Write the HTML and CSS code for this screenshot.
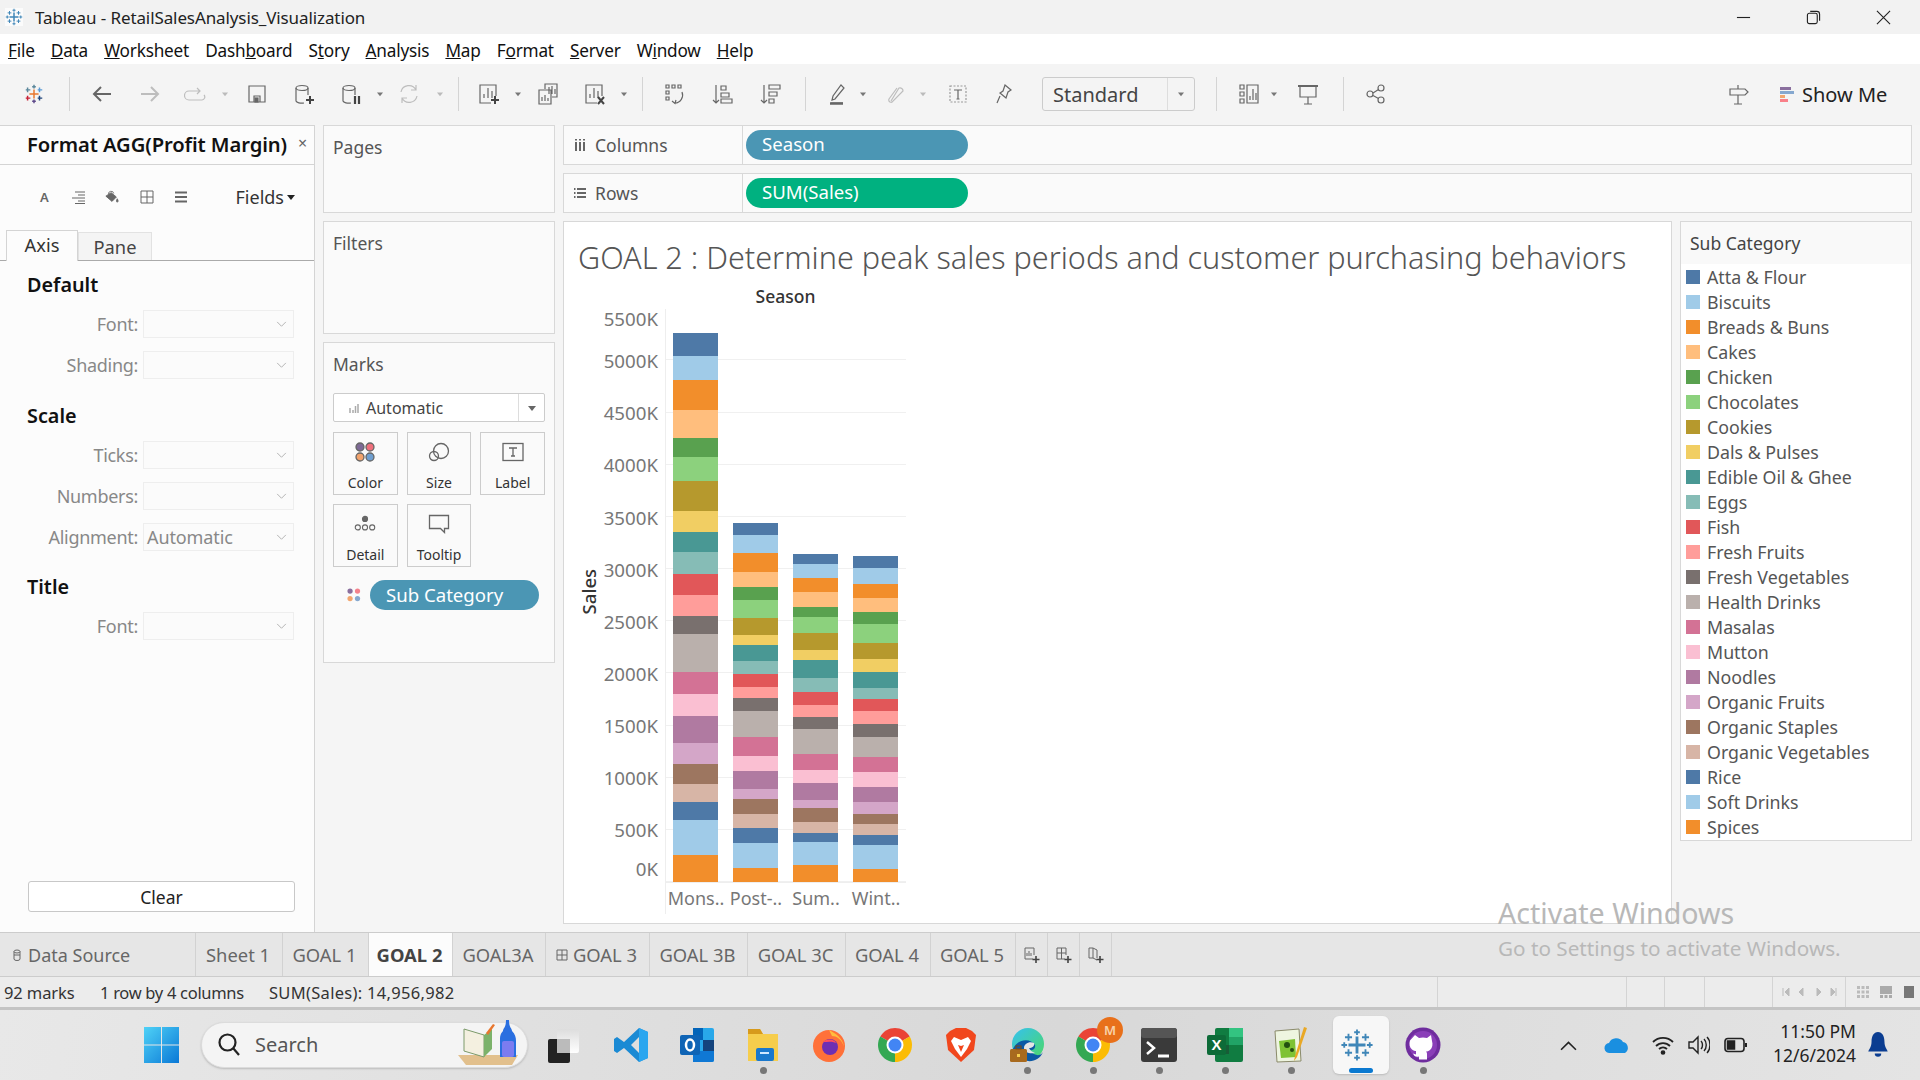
FILE: index.html
```html
<!DOCTYPE html>
<html lang="en">
<head>
<meta charset="utf-8">
<title>Tableau - RetailSalesAnalysis_Visualization</title>
<link rel="stylesheet" href="styles.css">
</head>
<body>
<svg class="defs" aria-hidden="true">
  <symbol id="tplus" viewBox="0 0 24 24"><path d="M12 6v12M6 12h12" stroke-width="2"/><path d="M12 1v4M10 3h4M12 19v4M10 21h4M1 12h4M3 10v4M19 12h4M21 10v4M6 4v5M3.5 6.5h5M18 4v5M15.500 6.500h5M6 15v5M3.500 17.500h5M18 15v5M15.500 17.500h5" stroke-width="1.300"/></symbol>
  <symbol id="caret" viewBox="0 0 8 8"><path d="M0 2h8L4 7z" stroke="none"/></symbol>
  <symbol id="chev" viewBox="0 0 12 8"><path d="M1 1l5 5 5-5" fill="none"/></symbol>
</svg>

<header class="titlebar">
  <svg class="tlogo" viewBox="0 0 24 24"><use href="#tplus"/></svg>
  <span class="apptitle">Tableau - RetailSalesAnalysis_Visualization</span>
  <div class="winctl">
    <svg viewBox="0 0 16 16"><path d="M1 8h14"/></svg>
    <svg viewBox="0 0 16 16"><rect x="1.500" y="3.500" width="10.500" height="11" rx="2"/><path d="M4.500 1.500h7a3 3 0 0 1 3 3v7"/></svg>
    <svg viewBox="0 0 16 16"><path d="M1 1l14 14M15 1L1 15"/></svg>
  </div>
</header>

<nav class="menubar">
  <span><u>F</u>ile</span><span><u>D</u>ata</span><span><u>W</u>orksheet</span><span>Dash<u>b</u>oard</span><span>S<u>t</u>ory</span><span><u>A</u>nalysis</span><span><u>M</u>ap</span><span>F<u>o</u>rmat</span><span><u>S</u>erver</span><span>W<u>i</u>ndow</span><span><u>H</u>elp</span>
</nav>

<div class="toolbar">
  <svg class="ti" viewBox="0 0 24 24"><g fill="none" stroke-width="1.600"><path d="M12 7v10M7 12h10" stroke="#e8762d"/><path d="M12 2v4M10 4h4M5 5v5M3 7.500h5" stroke="#5b879b"/><path d="M12 18v4M10 20h4" stroke="#5f4b8b"/><path d="M18 5v5M16 7.500h5" stroke="#5b9bd5"/><path d="M5 14v5M3 16.500h5" stroke="#c72035"/><path d="M18 14v5M16 16.500h5" stroke="#1f447a"/></g></svg>
  <i class="sep"></i>
  <svg class="ti" viewBox="0 0 22 22"><path d="M20 11H4M10 4l-7 7 7 7" stroke-width="2"/></svg>
  <svg class="ti off" viewBox="0 0 22 22"><path d="M2 11h16M12 4l7 7-7 7" stroke-width="2"/></svg>
  <svg class="ti off" viewBox="0 0 22 22"><path d="M16 8H5a3 3 0 0 0 0 9h13a3 3 0 0 0 2-5M13 5l3 3-3 3"/></svg>
  <svg class="tc off" viewBox="0 0 8 8"><use href="#caret"/></svg>
  <svg class="ti" viewBox="0 0 22 22"><path d="M3 3h16v16H3zM8 19v-6h6v6"/><rect x="9" y="15" width="3" height="4" fill="#666"/></svg>
  <svg class="ti" viewBox="0 0 22 22"><ellipse cx="9" cy="5" rx="6" ry="2.500"/><path d="M3 5v13a6 2.500 0 0 0 8 2M15 5v7"/><path d="M17 13v8M13 17h8" stroke-width="2" stroke="#444"/></svg>
  <svg class="ti" viewBox="0 0 22 22"><ellipse cx="9" cy="5" rx="6" ry="2.500"/><path d="M3 5v13a6 2.500 0 0 0 8 2M15 5v7"/><path d="M15 13v8M19 13v8" stroke-width="2.200" stroke="#444"/></svg>
  <svg class="tc" viewBox="0 0 8 8"><use href="#caret"/></svg>
  <svg class="ti off" viewBox="0 0 22 22"><path d="M3 9a8 8 0 0 1 15-2M19 13a8 8 0 0 1-15 2M18 2v5h-5M4 20v-5h5"/></svg>
  <svg class="tc off" viewBox="0 0 8 8"><use href="#caret"/></svg>
  <i class="sep"></i>
  <svg class="ti" viewBox="0 0 22 22"><path d="M13 20H2V2h16v11M6 15v-4M10 15V5M14 15V8" /><path d="M17 13v8M13 17h8" stroke-width="2" stroke="#444"/></svg>
  <svg class="tc" viewBox="0 0 8 8"><use href="#caret"/></svg>
  <svg class="ti" viewBox="0 0 22 22"><path d="M8 6V1h12v13h-5M12 11V4M15 11V3M18 11V6M2 7h12v14H2zM5 18v-4M8 18v-6M11 18v-3"/></svg>
  <svg class="ti" viewBox="0 0 22 22"><path d="M13 20H2V2h16v11M6 15v-4M10 15V5M14 15V8"/><path d="M14 14l6 7M20 14l-6 7" stroke-width="2" stroke="#444"/></svg>
  <svg class="tc" viewBox="0 0 8 8"><use href="#caret"/></svg>
  <i class="sep"></i>
  <svg class="ti" viewBox="0 0 22 22"><path d="M3 2h3v3H3zM9 2h3v3H9zM15 2h3v3h-3zM3 8h3v3H3zM3 14h3v3H3zM19 9a8 8 0 0 1-7 11M9 18l3 2.500 1-3.500"/></svg>
  <svg class="ti" viewBox="0 0 22 22"><path d="M4 2v18M1 17l3 3 3-3"/><path d="M9 3h5v4H9zM9 10h8v4H9zM9 16h11v4H9z"/></svg>
  <svg class="ti" viewBox="0 0 22 22"><path d="M4 2v18M1 17l3 3 3-3"/><path d="M9 2h11v4H9zM9 9h8v4H9zM9 16h5v4H9z"/></svg>
  <i class="sep"></i>
  <svg class="ti" viewBox="0 0 22 22"><path d="M14 2l3 3-9 11-3 1 1-4zM4 20h12" /><path d="M3 20.500h13" stroke-width="2.500"/></svg>
  <svg class="tc" viewBox="0 0 8 8"><use href="#caret"/></svg>
  <svg class="ti off" viewBox="0 0 22 22"><path d="M7 18l8-13a3 3 0 0 1 4 3L9 18a2 2 0 0 1-4-2l8-11"/></svg>
  <svg class="tc off" viewBox="0 0 8 8"><use href="#caret"/></svg>
  <svg class="ti" viewBox="0 0 22 22"><rect x="3" y="3" width="16" height="16" stroke-dasharray="2 1.500" stroke="#999"/><path d="M7 7h8M11 7v9M9.500 16h3"/></svg>
  <svg class="ti" viewBox="0 0 22 22"><path d="M12 2l6 5-3 2-2 6-6-5 3-2zM7 13l-3 7"/></svg>
  <div class="stdbox"><span>Standard</span><b><svg class="tc" viewBox="0 0 8 8"><use href="#caret"/></svg></b></div>
  <i class="sep"></i>
  <svg class="ti" viewBox="0 0 22 22"><path d="M2 2h4v4H2zM2 9h4v4H2zM2 16h4v4H2zM9 2h11v18H9zM12 17v-4M15 17V6M18 17v-7"/></svg>
  <svg class="tc" viewBox="0 0 8 8"><use href="#caret"/></svg>
  <svg class="ti" viewBox="0 0 22 22"><path d="M1 3h20" stroke-width="2"/><path d="M3 3v11h16V3M11 14v7M7 21h8"/></svg>
  <i class="sep"></i>
  <svg class="ti" viewBox="0 0 22 22"><circle cx="5" cy="11" r="3"/><circle cx="16" cy="5" r="3"/><circle cx="16" cy="17" r="3"/><path d="M8 10l5.500-3.500M8 12.500l5.500 3"/></svg>
  <svg class="ti" viewBox="0 0 22 22"><path d="M2 6h15l3 3-3 3H2zM10 2v4M10 12v9M6 21h8"/></svg>
  <div class="showme"><svg viewBox="0 0 14 15"><rect width="11" height="3" fill="#8a6f9e"/><rect y="4" width="14" height="3" fill="#86a8cf"/><rect y="8" width="5" height="3" fill="#f2a66f"/><rect y="12" width="8" height="3" fill="#f98089"/></svg><span>Show Me</span></div>
</div>

<main class="workspace">
  <aside class="format">
    <div class="fmt-head"><h2>Format AGG(Profit Margin)</h2><span class="x">×</span></div>
    <div class="fmt-icons">
      <span class="fa">A</span>
      <svg viewBox="0 0 14 14"><path d="M4 2h10M7 5h7M1 8h13M7 11h7M4 13.500h10"/></svg>
      <svg viewBox="0 0 16 14"><path d="M1 6l6-4 6 5-5 5z" fill="#666"/><path d="M4 4a3 3 0 0 1 6-1" fill="none"/><path d="M14 9c1 2 1.500 3 0 4-1.500-1-1-2 0-4z" fill="#666"/></svg>
      <svg viewBox="0 0 14 14"><path d="M1 1h12v12H1zM7 1v12M1 7h12"/></svg>
      <svg viewBox="0 0 14 14"><path d="M1 2.500h12M1 7h12M1 11.500h12" stroke-width="2.200"/></svg>
      <span class="fields">Fields<svg viewBox="0 0 8 8"><use href="#caret"/></svg></span>
    </div>
    <div class="fmt-tabs"><span class="on">Axis</span><span>Pane</span></div>
    <div class="fmt-body">
      <h3>Default</h3>
      <div class="frow"><label>Font:</label><div class="sel"><svg viewBox="0 0 12 8"><use href="#chev"/></svg></div></div>
      <div class="frow"><label>Shading:</label><div class="sel"><svg viewBox="0 0 12 8"><use href="#chev"/></svg></div></div>
      <h3 class="h-scale">Scale</h3>
      <div class="frow"><label>Ticks:</label><div class="sel"><svg viewBox="0 0 12 8"><use href="#chev"/></svg></div></div>
      <div class="frow"><label>Numbers:</label><div class="sel"><svg viewBox="0 0 12 8"><use href="#chev"/></svg></div></div>
      <div class="frow"><label>Alignment:</label><div class="sel">Automatic<svg viewBox="0 0 12 8"><use href="#chev"/></svg></div></div>
      <h3 class="h-title">Title</h3>
      <div class="frow"><label>Font:</label><div class="sel"><svg viewBox="0 0 12 8"><use href="#chev"/></svg></div></div>
    </div>
    <button class="clear" type="button">Clear</button>
  </aside>

  <section class="cards">
    <div class="card pages">Pages</div>
    <div class="card filters">Filters</div>
    <div class="card marks">
      <div>Marks</div>
      <div class="marktype"><svg viewBox="0 0 10 10"><path d="M1 5v5M4 7v3M6.500 3v7M9 1v9" stroke-width="1.500"/></svg><span>Automatic</span><b><svg viewBox="0 0 8 8"><use href="#caret"/></svg></b></div>
      <div class="markbtns">
        <div class="mb"><svg viewBox="0 0 20 20"><circle cx="5" cy="5" r="4" fill="#7e6a96"/><circle cx="15" cy="5" r="4" fill="#ef6f7c"/><circle cx="5" cy="15" r="4" fill="#f2a36c"/><circle cx="15" cy="15" r="4" fill="#6f9fd0"/></svg>Color</div>
        <div class="mb"><svg viewBox="0 0 22 20"><circle cx="13" cy="9" r="7.500"/><circle cx="6" cy="14" r="4.500"/></svg>Size</div>
        <div class="mb"><svg viewBox="0 0 22 20"><rect x="1" y="1.500" width="20" height="17"/><path d="M7 6h8M11 6v8M9 14h4"/></svg>Label</div>
        <div class="mb"><svg viewBox="0 0 26 20"><circle cx="13" cy="4" r="3" fill="#666"/><circle cx="4.500" cy="14" r="3"/><circle cx="13" cy="14" r="3"/><circle cx="21.500" cy="14" r="3"/></svg>Detail</div>
        <div class="mb"><svg viewBox="0 0 22 20"><path d="M1.500 1.500h19v13h-4v4l-4-4h-11z"/></svg>Tooltip</div>
      </div>
      <div class="markpill"><svg viewBox="0 0 16 16"><circle cx="3.500" cy="3.500" r="3" fill="#8a6f9e"/><circle cx="12" cy="3.500" r="3" fill="#f4828c"/><circle cx="3.500" cy="12" r="3" fill="#f2a66f"/><circle cx="12" cy="12" r="3" fill="#86a8cf"/></svg><span class="pill blue">Sub Category</span></div>
    </div>
  </section>

  <section class="stage">
    <div class="shelf"><div class="shelf-l"><svg viewBox="0 0 12 12"><path d="M2 3v9M6 3v9M10 3v9" stroke-width="2"/><path d="M2 0v1.500M6 0v1.500M10 0v1.500" stroke-width="2"/></svg>Columns</div><div class="shelf-r"><span class="pill blue wide">Season</span></div></div>
    <div class="shelf"><div class="shelf-l"><svg viewBox="0 0 12 12"><path d="M3 2h9M3 6h9M3 10h9M0 2h1.500M0 6h1.500M0 10h1.500" stroke-width="1.800"/></svg>Rows</div><div class="shelf-r"><span class="pill green wide">SUM(Sales)</span></div></div>
    <div class="vizrow">
      <div class="viz">
        <h1>GOAL 2 : Determine peak sales periods and customer purchasing behaviors</h1>
        <div class="chart">
          <div class="season">Season</div>
          <div class="ylabel"><span>Sales</span></div>
          <div class="yaxis"><span class="end top">5500K</span><span>5000K</span><span>4500K</span><span>4000K</span><span>3500K</span><span>3000K</span><span>2500K</span><span>2000K</span><span>1500K</span><span>1000K</span><span>500K</span><span class="end bot">0K</span></div>
          <div class="plot">
            <div class="col"><div class="bar" style="height:549px"><i class="c1" style="flex:56"></i><i class="c2" style="flex:59"></i><i class="c3" style="flex:73"></i><i class="c4" style="flex:69"></i><i class="c5" style="flex:47"></i><i class="c6" style="flex:58"></i><i class="c7" style="flex:74"></i><i class="c8" style="flex:51"></i><i class="c9" style="flex:49"></i><i class="c10" style="flex:54"></i><i class="c11" style="flex:52"></i><i class="c12" style="flex:51"></i><i class="c13" style="flex:44"></i><i class="c14" style="flex:93"></i><i class="c15" style="flex:54"></i><i class="c16" style="flex:54"></i><i class="c17" style="flex:66"></i><i class="c18" style="flex:52"></i><i class="c19" style="flex:49"></i><i class="c20" style="flex:44"></i><i class="c1" style="flex:44"></i><i class="c2" style="flex:86"></i><i class="c3" style="flex:66"></i></div></div>
            <div class="col"><div class="bar" style="height:359.200px"><i class="c1" style="flex:30"></i><i class="c2" style="flex:44"></i><i class="c3" style="flex:46"></i><i class="c4" style="flex:37"></i><i class="c5" style="flex:32"></i><i class="c6" style="flex:44"></i><i class="c7" style="flex:42"></i><i class="c8" style="flex:24"></i><i class="c9" style="flex:39"></i><i class="c10" style="flex:32"></i><i class="c11" style="flex:32"></i><i class="c12" style="flex:27"></i><i class="c13" style="flex:32"></i><i class="c14" style="flex:64"></i><i class="c15" style="flex:46"></i><i class="c16" style="flex:37"></i><i class="c17" style="flex:44"></i><i class="c18" style="flex:25"></i><i class="c19" style="flex:36"></i><i class="c20" style="flex:35"></i><i class="c1" style="flex:36"></i><i class="c2" style="flex:62"></i><i class="c3" style="flex:34"></i></div></div>
            <div class="col"><div class="bar" style="height:328.200px"><i class="c1" style="flex:25"></i><i class="c2" style="flex:34"></i><i class="c3" style="flex:34"></i><i class="c4" style="flex:37"></i><i class="c5" style="flex:25"></i><i class="c6" style="flex:39"></i><i class="c7" style="flex:41"></i><i class="c8" style="flex:25"></i><i class="c9" style="flex:44"></i><i class="c10" style="flex:34"></i><i class="c11" style="flex:32"></i><i class="c12" style="flex:30"></i><i class="c13" style="flex:29"></i><i class="c14" style="flex:61"></i><i class="c15" style="flex:39"></i><i class="c16" style="flex:32"></i><i class="c17" style="flex:42"></i><i class="c18" style="flex:20"></i><i class="c19" style="flex:34"></i><i class="c20" style="flex:27"></i><i class="c1" style="flex:22"></i><i class="c2" style="flex:56"></i><i class="c3" style="flex:42"></i></div></div>
            <div class="col"><div class="bar" style="height:326.100px"><i class="c1" style="flex:30"></i><i class="c2" style="flex:39"></i><i class="c3" style="flex:34"></i><i class="c4" style="flex:34"></i><i class="c5" style="flex:30"></i><i class="c6" style="flex:46"></i><i class="c7" style="flex:40"></i><i class="c8" style="flex:31"></i><i class="c9" style="flex:40"></i><i class="c10" style="flex:27"></i><i class="c11" style="flex:29"></i><i class="c12" style="flex:32"></i><i class="c13" style="flex:32"></i><i class="c14" style="flex:49"></i><i class="c15" style="flex:36"></i><i class="c16" style="flex:37"></i><i class="c17" style="flex:37"></i><i class="c18" style="flex:29"></i><i class="c19" style="flex:25"></i><i class="c20" style="flex:27"></i><i class="c1" style="flex:24"></i><i class="c2" style="flex:59"></i><i class="c3" style="flex:32"></i></div></div>
          </div>
          <div class="xaxis"><span>Mons..</span><span>Post-..</span><span>Sum..</span><span>Wint..</span></div>
        </div>
      </div>
      <aside class="legend">
        <div class="leg-head">Sub Category</div>
        <ul>
          <li><i class="c1"></i>Atta &amp; Flour</li>
          <li><i class="c2"></i>Biscuits</li>
          <li><i class="c3"></i>Breads &amp; Buns</li>
          <li><i class="c4"></i>Cakes</li>
          <li><i class="c5"></i>Chicken</li>
          <li><i class="c6"></i>Chocolates</li>
          <li><i class="c7"></i>Cookies</li>
          <li><i class="c8"></i>Dals &amp; Pulses</li>
          <li><i class="c9"></i>Edible Oil &amp; Ghee</li>
          <li><i class="c10"></i>Eggs</li>
          <li><i class="c11"></i>Fish</li>
          <li><i class="c12"></i>Fresh Fruits</li>
          <li><i class="c13"></i>Fresh Vegetables</li>
          <li><i class="c14"></i>Health Drinks</li>
          <li><i class="c15"></i>Masalas</li>
          <li><i class="c16"></i>Mutton</li>
          <li><i class="c17"></i>Noodles</li>
          <li><i class="c18"></i>Organic Fruits</li>
          <li><i class="c19"></i>Organic Staples</li>
          <li><i class="c20"></i>Organic Vegetables</li>
          <li><i class="c1"></i>Rice</li>
          <li><i class="c2"></i>Soft Drinks</li>
          <li><i class="c3"></i>Spices</li>
        </ul>
      </aside>
    </div>
  </section>
</main>

<div class="tabs">
  <div class="tab ds"><svg viewBox="0 0 8 12"><ellipse cx="4" cy="2.500" rx="3" ry="1.500"/><path d="M1 2.500v7.500a3 1.500 0 0 0 6 0V2.500M1 6h6"/></svg>Data Source</div>
  <div class="tab">Sheet 1</div>
  <div class="tab">GOAL 1</div>
  <div class="tab active">GOAL 2</div>
  <div class="tab">GOAL3A</div>
  <div class="tab"><svg viewBox="0 0 12 12"><path d="M1 1h10v10H1zM6 1v10M1 6h10"/></svg>GOAL 3</div>
  <div class="tab">GOAL 3B</div>
  <div class="tab">GOAL 3C</div>
  <div class="tab">GOAL 4</div>
  <div class="tab">GOAL 5</div>
  <div class="tab"><svg class="nt" viewBox="0 0 16 16"><path d="M9 12H1V1h9v7M3 9V6M5 9V4M7 9V6"/><path d="M12 9v7M8.500 12.500h7" stroke-width="1.600" stroke="#444"/></svg></div>
  <div class="tab"><svg class="nt" viewBox="0 0 16 16"><path d="M9 12H1V1h9v7M1 6h9M5.500 1v11"/><path d="M12 9v7M8.500 12.500h7" stroke-width="1.600" stroke="#444"/></svg></div>
  <div class="tab"><svg class="nt" viewBox="0 0 16 16"><path d="M9 13l-4-2H1V1h4l4 2v8M5 1v10"/><path d="M12 9v7M8.500 12.500h7" stroke-width="1.600" stroke="#444"/></svg></div>
  <div class="tab blank"></div>
</div>

<footer class="status">
  <span class="st st1">92 marks</span><span class="st st2">1 row by 4 columns</span><span class="st st3">SUM(Sales): 14,956,982</span>
  <i class="cell c-a"></i><i class="cell c-b"></i><i class="cell c-c"></i><i class="cell c-d"></i>
  <div class="cell nav"><svg viewBox="0 0 54 10"><path d="M1 1v8M7 1L3 5l4 4zM21 1l-4 4 4 4zM35 1l4 4-4 4zM49 1l4 4-4 4zM54 1v8" fill="#bbb" stroke="#bbb"/></svg></div>
  <div class="cell views">
    <svg viewBox="0 0 12 12"><path d="M0 0h3v3H0zM4.500 0h3v3h-3zM9 0h3v3H9zM0 4.500h3v3H0zM4.500 4.500h3v3h-3zM9 4.500h3v3H9zM0 9h3v3H0zM4.500 9h3v3h-3zM9 9h3v3H9z" fill="#bbb"/></svg>
    <svg viewBox="0 0 12 12"><path d="M0 0h12v8H0zM0 9h3v3H0zM4.500 9h3v3h-3zM9 9h3v3H9z" fill="#aaa"/></svg>
    <svg viewBox="0 0 12 12"><path d="M1 0h10v12H1z" fill="#777"/></svg>
  </div>
</footer>

<div class="taskbar">
  <svg class="winlogo" viewBox="0 0 35 36"><defs><linearGradient id="wg" x1="0" y1="0" x2="1" y2="1"><stop offset="0" stop-color="#4fd2f7"/><stop offset="1" stop-color="#0a78d6"/></linearGradient></defs><path d="M0 0h17v17.500H0zM18 0h17v17.500H18zM0 18.500h17V36H0zM18 18.500h17V36H18z" fill="url(#wg)"/></svg>
  <div class="search">
    <svg class="sq" viewBox="0 0 24 24"><circle cx="10.500" cy="10.500" r="8"/><path d="M16 16l6 7"/></svg>
    <span>Search</span>
    <svg class="sart" viewBox="0 0 66 50"><path d="M2 38h60l-6 10H10z" fill="#e2c08d"/><path d="M8 12l20 6v22L8 34z" fill="#f4f0e0" stroke="#7c9a6a"/><path d="M28 18l8-6v20l-8 8z" fill="#7cb26a"/><path d="M30 16l7-9 2 1-7 10z" fill="#e8762d"/><path d="M47 14c0-3 3-3 3-11h3c0 8 3 8 3 11 3 3 4 6 4 10v16H44V24c0-4 0-7 3-10z" fill="#2a6fe0"/><rect x="46" y="24" width="12" height="16" rx="2" fill="#7c7cf0"/></svg>
  </div>
  <div class="app wide-app"><svg viewBox="0 0 36 36"><defs><linearGradient id="tv" x1="0" y1="0" x2="0" y2="1"><stop offset="0" stop-color="#ddd"/><stop offset="1" stop-color="#fff"/></linearGradient></defs><rect x="12" y="2" width="22" height="24" rx="2" fill="url(#tv)"/><rect x="3" y="12" width="22" height="24" rx="2" fill="#222"/><rect x="12" y="12" width="13" height="14" fill="#bbb"/></svg></div>
  <div class="app"><svg viewBox="0 0 36 36"><path d="M26 1l9 4v26l-9 4-15-14-7 5-3-2V12l3-2 7 5zM26 10l-8 8 8 8z" fill="#1a8ad4"/><path d="M26 1l9 4v26l-9 4z" fill="#2ba6ef"/></svg></div>
  <div class="app"><svg viewBox="0 0 36 36"><rect x="14" y="1" width="21" height="34" rx="2" fill="#28a8ea"/><rect x="14" y="1" width="10" height="12" fill="#0364b8"/><rect x="24" y="13" width="11" height="11" fill="#14447d"/><path d="M14 24h21v9a2 2 0 0 1-2 2H14z" fill="#0f78d4"/><rect x="1" y="8" width="20" height="20" rx="2" fill="#0f64b5"/><ellipse cx="11" cy="18" rx="4" ry="5.500" fill="none" stroke="#fff" stroke-width="2.500"/></svg></div>
  <div class="app dot"><svg viewBox="0 0 36 36"><path d="M3 2h12l3 5h15v27H3z" fill="#f6cd4c"/><path d="M3 2h12l3 5H3z" fill="#d79a1c"/><rect x="11" y="21" width="18" height="13" rx="2" fill="#1a78cc"/><rect x="15" y="25" width="9" height="2" fill="#cfe7ff"/></svg></div>
  <div class="app"><svg viewBox="0 0 36 36"><circle cx="18" cy="19" r="16" fill="#ff7139"/><path d="M18 3c6 3 14 8 15 17-2-8-8-11-12-11z" fill="#ffbd3d"/><circle cx="19" cy="20" r="8" fill="#6e2fb3"/><path d="M12 15c4-4 12-3 13 1-4-2-9-1-13-1z" fill="#ff4f5e"/></svg></div>
  <div class="app"><svg viewBox="0 0 36 36"><path d="M18 18L3.300 9.500A17 17 0 0 1 32.700 9.500z" fill="#ea4335"/><path d="M18 18L32.700 9.500A17 17 0 0 1 18 35z" fill="#fbbc04"/><path d="M18 18L18 35A17 17 0 0 1 3.300 9.500z" fill="#34a853"/><circle cx="18" cy="18" r="8.500" fill="#fff"/><circle cx="18" cy="18" r="6.500" fill="#4285f4"/></svg></div>
  <div class="app"><svg viewBox="0 0 36 36"><path d="M7 4l6-3h10l6 3 4 4-2 15-13 12L5 23 3 8z" fill="#f1471d"/><path d="M11 10l7 3 7-3 3 4-4 8-6 8-6-8-4-8z" fill="#fff"/><path d="M15 18l3 1 3-1-3 7z" fill="#f1471d"/></svg></div>
  <div class="app dot"><svg viewBox="0 0 36 36"><defs><linearGradient id="eg" x1="0" y1="0" x2="1" y2="1"><stop offset="0" stop-color="#35c1f1"/><stop offset="1" stop-color="#4cd964"/></linearGradient></defs><circle cx="19" cy="17" r="16" fill="url(#eg)"/><path d="M3 24c4-12 18-14 23-6 1 4-3 6-6 5 8 8 12 5 14 2-3 8-12 11-19 8" fill="#0c59a4"/><path d="M15 21c0-4 5-7 10-5 1 3-2 5-5 5 1 2 3 4 6 5-6 1-11-1-11-5z" fill="#e4e4e4"/><rect x="1" y="22" width="17" height="13" rx="1.500" fill="#a86a1e"/><rect x="7" y="19" width="5" height="3" fill="none" stroke="#7a4a10"/><rect x="8" y="27" width="3" height="3" fill="#f6cd4c"/></svg></div>
  <div class="app dot badged"><svg viewBox="0 0 36 36"><path d="M18 18L3.300 9.500A17 17 0 0 1 32.700 9.500z" fill="#ea4335"/><path d="M18 18L32.700 9.500A17 17 0 0 1 18 35z" fill="#fbbc04"/><path d="M18 18L18 35A17 17 0 0 1 3.300 9.500z" fill="#34a853"/><circle cx="18" cy="18" r="8.500" fill="#fff"/><circle cx="18" cy="18" r="6.500" fill="#4285f4"/></svg><span class="badge">M</span></div>
  <div class="app dot"><svg viewBox="0 0 36 36"><rect y="1" width="36" height="34" rx="3" fill="#3a3a3a"/><rect y="1" width="36" height="10" rx="3" fill="#555"/><path d="M6 15l7 6-7 6" fill="none" stroke="#fff" stroke-width="2.500"/><path d="M17 29h11" stroke="#fff" stroke-width="3"/></svg></div>
  <div class="app dot"><svg viewBox="0 0 36 36"><rect x="8" y="1" width="28" height="34" rx="2" fill="#107c41"/><rect x="22" y="1" width="14" height="9" fill="#33c481"/><rect x="22" y="10" width="14" height="8" fill="#21a366"/><rect x="8" y="18" width="14" height="9" fill="#185c37"/><rect x="22" y="18" width="14" height="9" fill="#107c41"/><rect y="8" width="19" height="20" rx="2" fill="#0d6b38"/><text x="9.500" y="23" class="xl">X</text></svg></div>
  <div class="app dot"><svg viewBox="0 0 36 36"><path d="M2 4l24-2 2 32-24 1z" fill="#eef5e0" stroke="#8a8a6a"/><path d="M6 14l16-2 1 18-15 1z" fill="#7ec234"/><circle cx="14" cy="18" r="3" fill="#234f10"/><circle cx="19" cy="23" r="2" fill="#234f10"/><path d="M34 1L24 30l-3 4 1-5L31 0z" fill="#e9a825"/></svg></div>
  <div class="app tile"><svg class="tlogo2" viewBox="0 0 24 24"><use href="#tplus"/></svg></div>
  <div class="app dot"><svg viewBox="0 0 36 36"><circle cx="18" cy="18" r="17.500" fill="#6f2d9e"/><circle cx="18" cy="18" r="14" fill="#8a3fb8"/><path d="M10 8l4 3c2.500-.700 5.500-.700 8 0l4-3 1 6c1 3 .500 7-2 9-1.500 1-3 1.500-4 1.500 1 1 1 2 1 3v5h-8v-3c-3 1-5-.500-6-3l3 1v-3.500c-1 0-2.500-.500-4-1.500-2.500-2-3-6-2-9z" fill="#fff"/></svg></div>
  <div class="tray">
    <svg class="tr caretup" viewBox="0 0 16 16"><path d="M1 12l7-7 7 7"/></svg>
    <svg class="tr cloud" viewBox="0 0 26 20"><path d="M6 18a5 5 0 0 1-1-10 8 8 0 0 1 14-1 6 6 0 0 1 2 11z" fill="#1a8fe0"/></svg>
    <svg class="tr wifi" viewBox="0 0 22 20"><path d="M1 7a14 14 0 0 1 20 0M4 11a10 10 0 0 1 14 0M7 14a6 6 0 0 1 8 0" stroke-width="1.800"/><circle cx="11" cy="17.500" r="1.600" fill="#222"/></svg>
    <svg class="tr vol" viewBox="0 0 22 20"><path d="M1 7h4l5-5v16l-5-5H1zM13 6c2 2 2 6 0 8M16 4c3 3 3 9 0 12M19 2c4 4 4 12 0 16" stroke-width="1.400"/></svg>
    <svg class="tr bat" viewBox="0 0 24 16"><rect x="1" y="1.500" width="19" height="13" rx="3" stroke-width="1.600"/><rect x="3.500" y="4" width="7" height="8" fill="#222"/><path d="M22 6v4" stroke-width="2"/></svg>
    <div class="clock"><span>11:50 PM</span><span>12/6/2024</span></div>
    <svg class="bell" viewBox="0 0 20 26"><path d="M10 1c4 0 6 4 6 9 0 5 3 8 3 9H1c0-1 3-4 3-9 0-5 2-9 6-9z" fill="#0b3d91"/><path d="M7 21h6a3 3 0 0 1-6 0z" fill="#0b3d91"/></svg>
  </div>
</div>

<div class="activate"><div>Activate Windows</div><p>Go to Settings to activate Windows.</p></div>
</body>
</html>
```
FILE: styles.css
```css
*{box-sizing:border-box}
html,body{margin:0;padding:0}
body{width:1920px;height:1080px;overflow:hidden;position:relative;display:flex;flex-direction:column;font-family:"Noto Sans","Open Sans",sans-serif;color:#222;background:#f5f5f5}
.defs{position:absolute;width:0;height:0}
svg{display:block;flex:none}
i{font-style:normal}

.titlebar{height:34px;background:#f2f2f2;display:flex;align-items:center;padding-left:5px}
.tlogo{width:18px;height:18px;color:#3f86b8;stroke:currentColor;fill:none;background:#fbfbfb}
.apptitle{margin-left:12px;font-size:17px;letter-spacing:-.1px}
.winctl{margin-left:auto;display:flex;margin-right:29px;gap:55px}
.winctl svg{width:15px;height:15px;fill:none;stroke:#222;stroke-width:1.200}

.menubar{height:30px;background:#fff;display:flex;align-items:center;padding:2px 0 0 8px;gap:16.100px;font-size:17.200px;letter-spacing:-.2px;color:#111}

.toolbar{height:61px;background:#f4f4f4;display:grid;align-items:center;justify-items:end;padding-bottom:1px;
 grid-template-columns:45px 25px 43px 48px 45px 23px 39px 47px 47px 22px 36px 24px 15px 41px 22px 37px 47px 22px 15px 42px 49px 48px 24px 43px 18px 39px 21px 42px 46px 180px 22px 43px 18px 41px 25px 43px 363px 170px}
.ti{width:22px;height:22px;fill:none;stroke:#666;stroke-width:1.200}
.ti.off{stroke:#bdbdbd}
.tc{width:6px;height:6px;margin-right:1px;fill:#777}
.tc.off{fill:#bbb}
.sep{width:1px;height:34px;background:#d4d4d4}
.stdbox{width:153px;height:34px;border:1px solid #ccc;border-radius:3px;display:flex;align-items:center;font-size:20px;color:#444;padding-left:10px}
.stdbox span{flex:1}
.stdbox b{width:27px;height:100%;border-left:1px solid #ddd;display:flex;align-items:center;justify-content:center}
.showme{justify-self:stretch;display:flex;align-items:center;gap:8px;padding-left:30px;font-size:20px;color:#222}
.showme svg{width:14px;height:15px}

.workspace{height:807px;display:grid;grid-template-columns:315px 232px 1fr;gap:8px;padding-right:8px;padding-bottom:8px}

.format{margin-bottom:-8px;background:#fcfcfc;border:1px solid #d4d4d4;border-left:0;border-bottom:0;display:flex;flex-direction:column}
.fmt-head{height:39px;border-bottom:1px solid #d4d4d4;display:flex;align-items:center;padding:0 0 2px 27px;position:relative}
.fmt-head h2{margin:0;font-size:20.200px;font-weight:600;color:#111;letter-spacing:-.1px;white-space:nowrap}
.x{position:absolute;left:298px;top:6px;font-size:16px;color:#666}
.fmt-icons{height:64px;display:flex;align-items:center;padding-left:39px;gap:20.500px}
.fmt-icons svg{width:14px;height:14px;fill:none;stroke:#666;stroke-width:1}
.fa{width:10px;margin-left:1px;font-size:13px;font-weight:600;color:#666}
.fields{margin-left:auto;margin-right:19px;font-size:18px;display:flex;align-items:center;gap:3px;color:#333}
.fields svg{width:8px;height:8px;fill:#222;stroke:none}
.fmt-tabs{height:32px;display:flex;align-items:flex-end;border-bottom:1px solid #aaa;padding-left:6px;font-size:18.300px;color:#444}
.fmt-tabs span{width:74px;height:28px;background:#f4f4f4;border:1px solid #e2e2e2;border-bottom:0;text-align:center;line-height:28px}
.fmt-tabs .on{width:72px;height:31px;background:#fcfcfc;border-color:#d4d4d4;margin-bottom:-1px;color:#333}
.fmt-body{display:flex;flex-direction:column;padding-top:9px}
.fmt-body h3{margin:0 0 10px 27px;height:30px;font-size:19.800px;line-height:30px;font-weight:600;color:#111}
.fmt-body .h-scale{margin-top:8px}
.fmt-body .h-title{margin-top:8px;margin-bottom:10px}
.frow{display:flex;height:28px;margin-bottom:13.300px;align-items:center;font-size:18px;color:#888}
.frow label{width:138px;text-align:right;letter-spacing:-.3px}
.sel{margin-left:5px;width:151px;height:28px;border:1px solid #eee;background:#fbfbfb;padding-left:3px;line-height:26px;position:relative;color:#888;letter-spacing:-.1px}
.sel svg{position:absolute;right:6px;top:10px;width:11px;height:7px;stroke:#aaa;fill:none;stroke-width:1}
.clear{margin:auto 0 20px 28px;width:267px;height:31px;background:#fff;border:1px solid #c8c8c8;border-radius:3px;font:17.500px "Noto Sans",sans-serif;color:#222}

.cards{display:flex;flex-direction:column;gap:8px}
.card{background:#fafafa;border:1px solid #d8d8d8;padding:9px 9px;font-size:17.500px;color:#555;line-height:24px}
.pages{height:88px}
.filters{height:113px}
.marks{height:321px;padding-top:9px}
.marktype{margin-top:17px;height:29px;background:#fff;border:1px solid #ccc;border-radius:2px;display:flex;align-items:center;padding-left:15px;font-size:16px;color:#444}
.marktype svg{width:10px;height:10px;stroke:#aaa;margin-right:7px}
.marktype span{flex:1}
.marktype b{width:26px;height:100%;border-left:1px solid #ddd;display:flex;align-items:center;justify-content:center}
.marktype b svg{width:8px;height:8px;margin:0;fill:#666;stroke:none}
.markbtns{margin-top:10px;display:grid;grid-template-columns:repeat(3,1fr);grid-auto-rows:63px;gap:9px}
.mb{background:#fafafa;border:1px solid #ccc;display:flex;flex-direction:column;align-items:center;font-size:14px;color:#333;padding-top:9px;line-height:20px;justify-content:space-between;padding-bottom:1px}
.mb svg{width:22px;height:20px;fill:none;stroke:#666;stroke-width:1.300}
.markpill{margin-top:13px;display:flex;align-items:center;padding-left:14px;gap:9px}
.markpill svg{width:14px;height:14px}
.pill{display:flex;align-items:center;color:#fff;font-size:18.600px;border-radius:15px;height:30px;padding:0 0 1px 16px}
.markpill .pill{width:169px}
.shelf .pill{padding-bottom:3px}
.blue{background:#4b96b4}
.green{background:#00b180}
.wide{width:222px}

.stage{display:flex;flex-direction:column;gap:8px;min-width:0}
.shelf{height:40px;background:#fafafa;border:1px solid #d8d8d8;display:flex;flex:none}
.shelf-l{width:179px;border-right:1px solid #d8d8d8;display:flex;align-items:center;font-size:17.500px;color:#555;padding-left:10px;gap:9px}
.shelf-l svg{width:12px;height:12px;stroke:#666;fill:none}
.shelf-r{padding:4px 0 0 3px}
.vizrow{display:flex;gap:8px;align-items:flex-start}
.viz{width:1109px;height:703px;background:#fff;border:1px solid #d8d8d8}
.viz h1{margin:15px 0 0 14px;height:40px;font-size:30.600px;line-height:40px;font-weight:300;color:#555;white-space:nowrap}
.chart{margin-top:9px;padding-left:14px;display:grid;grid-template-columns:22px 65px 241px;grid-template-rows:23px 574px 31px}
.season{grid-column:3;font-size:17.500px;font-weight:500;color:#333;text-align:center;line-height:21px}
.ylabel{grid-column:1;grid-row:2;display:flex;justify-content:center;align-items:center;padding:0 2px 8px 0}
.ylabel span{writing-mode:vertical-rl;transform:rotate(180deg);font-size:18.500px;font-weight:500;color:#333}
.yaxis{grid-column:2;grid-row:2;display:flex;flex-direction:column;padding-right:7px;text-align:right;font-size:18.700px;color:#777;margin-top:-1px}
.yaxis span{height:52.150px;line-height:54px}
.yaxis .end{height:26.100px;line-height:26.100px}
.yaxis .top{line-height:22px}
.plot{grid-column:3;grid-row:2;display:flex;border-left:1px solid #eee;border-bottom:1px solid #eee;
 background:repeating-linear-gradient(to top,#f0f0f0 0 1px,transparent 1px 52.150px)}
.col{width:60px;display:flex;align-items:flex-end;justify-content:center;padding-right:1px}
.bar{width:45px;display:flex;flex-direction:column}
.bar i{display:block;min-height:0}
.xaxis{grid-column:3;grid-row:3;display:flex;font-size:18px;color:#777;line-height:31px;border-left:1px solid #eee}
.xaxis span{width:60px;text-align:center;white-space:nowrap}

.c1{background:#4e79a7}.c2{background:#a0cbe8}.c3{background:#f28e2b}.c4{background:#ffbe7d}.c5{background:#59a14f}.c6{background:#8cd17d}.c7{background:#b6992d}.c8{background:#f1ce63}.c9{background:#499894}.c10{background:#86bcb6}.c11{background:#e15759}.c12{background:#ff9d9a}.c13{background:#79706e}.c14{background:#bab0ac}.c15{background:#d37295}.c16{background:#fabfd2}.c17{background:#b07aa1}.c18{background:#d4a6c8}.c19{background:#9d7660}.c20{background:#d7b5a6}

.legend{width:232px;height:620px;background:#fff;border:1px solid #d8d8d8}
.leg-head{height:42px;background:#f9f9f9;padding-left:9px;line-height:42px;font-size:17.500px;color:#444}
.legend ul{list-style:none;margin:0;padding:0}
.legend li{height:25px;display:flex;align-items:center;padding-left:5px;font-size:17.800px;color:#555;white-space:nowrap}
.legend li i{width:14px;height:14px;margin-right:7px}

.tabs{height:45px;background:#e6e6e6;border-top:1px solid #ccc;border-bottom:1px solid #ccc;display:grid;grid-template-columns:195px 87px 86px 84px 93px 104px 98px 98px 85px 85px 32px 32px 32px 1fr;font-size:18.400px;color:#666}
.tab{display:flex;align-items:center;justify-content:center;border-left:1px solid #d2d2d2;gap:5px;white-space:nowrap;padding-right:2px}
.tab svg{width:12px;height:12px;fill:none;stroke:#666;stroke-width:1}
.tab .nt{width:16px;height:16px;margin-left:2px}
.tab.ds{border-left:0;justify-content:flex-start;padding-left:13px;gap:7px;font-size:18px}
.tab.ds svg{width:8px;height:12px}
.tab.active{background:#fcfcfc;font-weight:700;color:#444}

.status{height:33px;background:#ececec;border-bottom:3px solid #c4c4c4;display:flex;align-items:stretch;font-size:16.500px;color:#333;line-height:32px;white-space:nowrap}
.st1{margin-left:4px;width:96px;letter-spacing:-.1px}
.st2{width:169px;letter-spacing:-.3px}
.st3{width:1168px;letter-spacing:.3px}
.cell{border-left:1px solid #d4d4d4}
.c-a{width:189px}.c-b{width:38px}.c-c{width:40px}.c-d{width:68px}
.nav{width:73px;display:flex;align-items:center;padding-left:8px}
.nav svg{width:56px;height:10px}
.views{flex:1;display:flex;align-items:center;gap:11px;padding-left:11px}
.views svg{width:12px;height:12px}

.taskbar{height:70px;background:linear-gradient(100deg,#e8e8e8,#d8d8d8 55%,#e4e4e4);display:flex;align-items:center;padding-left:144px}
.winlogo{width:35px;height:36px}
.search{margin-left:22px;width:327px;height:46px;border-radius:23px;background:#f4f4f4;border:1px solid #dcdcdc;box-shadow:0 1px 2px #bbb;display:flex;align-items:center;padding:0 0 2px 15px;font-size:20px;color:#555;position:relative}
.sq{width:24px;height:26px;fill:none;stroke:#222;stroke-width:2.200;margin-right:14px}
.sart{position:absolute;right:5px;bottom:0;width:66px;height:50px}
.app{width:66px;height:70px;display:flex;align-items:center;justify-content:center;position:relative;flex:none}
.wide-app{width:70px}
.app svg{width:36px;height:36px}
.dot::after{content:"";position:absolute;left:50%;margin-left:-3px;bottom:6px;width:7px;height:7px;border-radius:50%;background:#777}
.xl{font:700 15px "Liberation Sans",sans-serif;fill:#fff;text-anchor:middle}
.badge{position:absolute;left:37px;top:7px;width:26px;height:26px;border-radius:50%;background:#e8701a;color:#f9d2a8;font-size:13px;font-weight:600;text-align:center;line-height:26px}
.tile::before{content:"";position:absolute;left:9px;top:6px;width:56px;height:58px;background:#f7f7f7;border-radius:6px;box-shadow:0 1px 2px #bbb}
.tile::after{content:"";position:absolute;left:25px;top:58px;width:24px;height:5px;border-radius:3px;background:#0b79d0}
.app .tlogo2{position:relative;width:34px;height:36px;color:#3f86b8;stroke:currentColor;fill:none}
.tray{margin-left:auto;display:flex;align-items:center;padding-right:31px;position:relative}
.tr{fill:none;stroke:#222;stroke-width:1.500}
.caretup{width:17px;height:17px;margin-right:27px}
.cloud{width:26px;height:20px;margin-right:22px;stroke:none}
.wifi{width:22px;height:20px;margin-right:14px}
.vol{width:22px;height:22px;margin-right:14px}
.bat{width:24px;height:16px}
.clock{width:108px;display:flex;flex-direction:column;align-items:flex-end;font-size:17.500px;line-height:24px;color:#222;white-space:nowrap;padding-bottom:4px}
.bell{width:22px;height:28px;margin-left:11px}

.activate{position:absolute;left:1498px;top:894px;color:#b8b8b8;pointer-events:none}
.activate div{font-size:28.600px;line-height:38px}
.activate p{margin:0;font-size:20.700px;line-height:28px;margin-top:2px}
```
